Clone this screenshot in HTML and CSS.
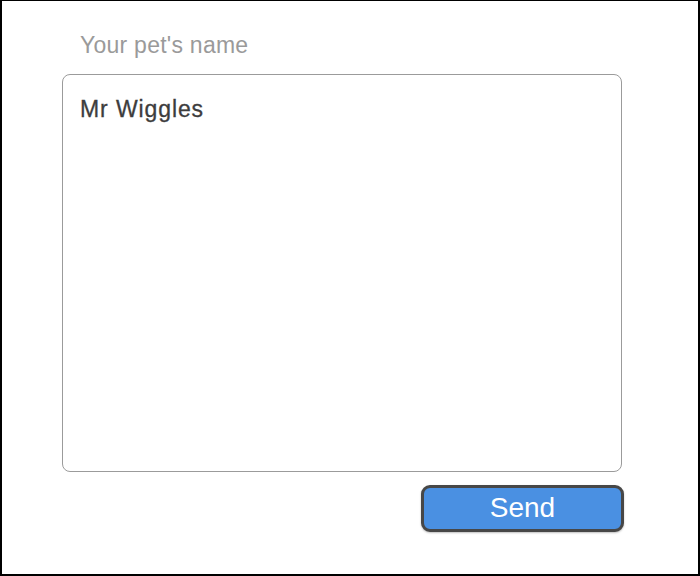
FILE: index.html
```html
<!DOCTYPE html>
<html>
<head>
<meta charset="utf-8">
<link rel="stylesheet" href="styles.css">
</head>
<body>
<div class="frame">
  <form class="form">
    <label class="label" for="pet">Your pet's name</label>
    <textarea id="pet" class="field">Mr Wiggles</textarea>
    <div class="actions">
      <button type="button" class="send">Send</button>
    </div>
  </form>
</div>
</body>
</html>
```

FILE: styles.css
```css
html, body {
  margin: 0;
  padding: 0;
  background: #fff;
}
.frame {
  box-sizing: border-box;
  width: 700px;
  height: 576px;
  border: 2px solid #000;
  border-top-width: 1px;
  padding: 29px 0 0 60px;
  font-family: "Liberation Sans", Arial, sans-serif;
}
.form {
  width: 562px;
  display: flex;
  flex-direction: column;
}
.label {
  font-size: 23px;
  letter-spacing: 0.25px;
  color: #9a9a9a;
  padding-left: 18px;
  line-height: 30px;
  margin-bottom: 14px;
}
.field {
  box-sizing: border-box;
  width: 560px;
  height: 398px;
  border: 1px solid #9b9b9b;
  border-radius: 8px;
  padding: 21px 17px;
  font-family: "Liberation Sans", Arial, sans-serif;
  font-size: 23px;
  letter-spacing: 0.9px;
  -webkit-text-stroke: 0.3px #3d3d3d;
  color: #3d3d3d;
  resize: none;
  outline: none;
  margin: 0;
}
.actions {
  display: flex;
  justify-content: flex-end;
  margin-top: 13px;
}
.send {
  box-sizing: border-box;
  width: 203px;
  height: 47px;
  background: #4a90e2;
  border: 3px solid #474747;
  border-radius: 9px;
  color: #fff;
  font-family: "Liberation Sans", Arial, sans-serif;
  font-size: 28px;
  padding: 0 0 2px;
  line-height: 38px;
  box-shadow: 0 1px 2px rgba(0,0,0,0.25);
}
```
